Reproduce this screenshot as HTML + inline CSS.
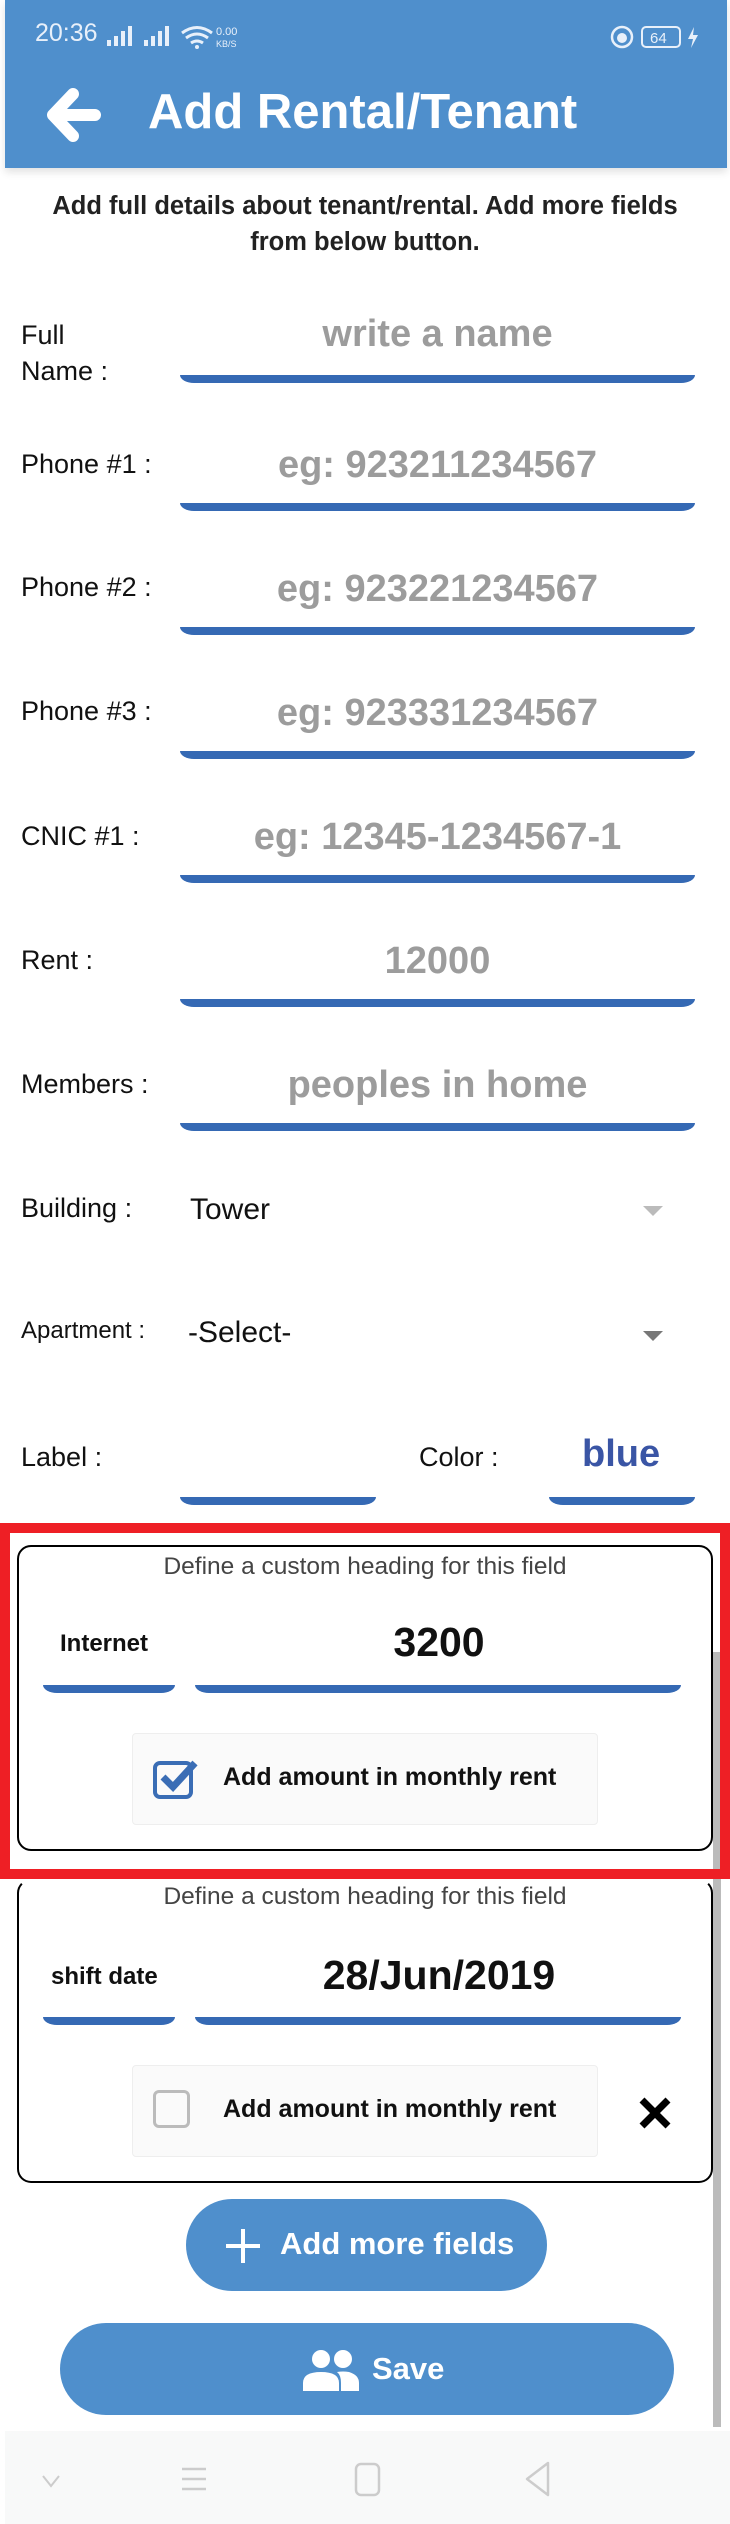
<!DOCTYPE html>
<html><head><meta charset="utf-8"><style>
*{margin:0;padding:0;box-sizing:border-box}
body{width:730px;height:2524px;position:relative;background:#fff;font-family:"Liberation Sans",sans-serif;overflow:hidden}
.a{position:absolute}
.hdr{left:5px;top:0;width:722px;height:168px;background:#4f8fcc;box-shadow:0 4px 8px rgba(0,0,0,.12)}
.lbl{position:absolute;left:21px;font-size:27px;color:#111}
.ul{position:absolute;height:8px;background:#3569b4;border-radius:0 0 14px 14px/0 0 8px 8px}
.ph{position:absolute;left:180px;width:515px;text-align:center;font-size:38px;font-weight:bold;color:#9c9c9c}
.card{position:absolute;left:17px;width:696px;border:2.5px solid #000;border-radius:14px}
.def{position:absolute;left:0;width:100%;text-align:center;font-size:24.5px;color:#444}
.chk{position:absolute;left:132px;width:466px;height:92px;background:#fafafa;border:1.5px solid #eee;border-radius:4px}
.chk span{position:absolute;left:90px;top:29px;font-size:25px;font-weight:bold;color:#111}
.btn{position:absolute;background:#4f8fcc;border-radius:46px;color:#fff;font-weight:bold;text-align:center}
</style></head><body>
<div class="a hdr"></div>
<div class="a" style="left:35px;top:19px;color:#e8f0fa;font-size:25px">20:36</div>
<svg class="a" style="left:105px;top:24px" width="140" height="26">
<g fill="#e8f0fa"><rect x="2" y="16" width="4" height="6"/><rect x="9" y="12" width="4" height="10"/><rect x="16" y="7" width="4" height="15"/><rect x="23" y="2" width="4" height="20"/>
<rect x="39" y="16" width="4" height="6"/><rect x="46" y="12" width="4" height="10"/><rect x="53" y="7" width="4" height="15"/><rect x="60" y="2" width="4" height="20"/></g>
<path d="M77 9 Q92 -2 107 9 M81 14 Q92 6 103 14 M86 19 Q92 15 98 19" stroke="#e8f0fa" stroke-width="3" fill="none"/><circle cx="92" cy="23" r="2" fill="#e8f0fa"/>
<text x="111" y="11" font-size="11" fill="#e8f0fa" font-family="Liberation Sans">0.00</text><text x="111" y="23" font-size="9" fill="#e8f0fa" font-family="Liberation Sans">KB/S</text></svg>
<svg class="a" style="left:605px;top:24px" width="100" height="30">
<circle cx="17" cy="13" r="10" stroke="#e8f0fa" stroke-width="2.5" fill="none"/><circle cx="17" cy="14" r="5" fill="#e8f0fa"/>
<rect x="37" y="3" width="38" height="20" rx="4" stroke="#e8f0fa" stroke-width="2" fill="none"/><text x="45" y="19" font-size="15" fill="#e8f0fa" font-family="Liberation Sans">64</text>
<path d="M89 3 L83 15 L88 15 L86 24 L93 11 L88 11 Z" fill="#e8f0fa"/></svg>
<svg class="a" style="left:45px;top:88px" width="56" height="56"><path d="M28 6 L8 27 L28 48 M10 27 L50 27" stroke="#fff" stroke-width="12" stroke-linecap="round" stroke-linejoin="round" fill="none"/></svg>
<div class="a" style="left:148px;top:84px;font-size:49px;font-weight:bold;color:#fff">Add Rental/Tenant</div>
<div class="a" style="left:0;top:188px;width:730px;text-align:center;font-size:25.5px;font-weight:bold;color:#222;line-height:36px">Add full details about tenant/rental. Add more fields<br>from below button.</div>

<div class="lbl" style="top:317px;line-height:36px">Full<br>Name :</div>
<div class="ph" style="top:313px">write a name</div><div class="ul" style="left:180px;top:375px;width:515px"></div>

<div class="lbl" style="top:449px">Phone #1 :</div>
<div class="ph" style="top:444px">eg: 923211234567</div><div class="ul" style="left:180px;top:503px;width:515px"></div>
<div class="lbl" style="top:572px">Phone #2 :</div>
<div class="ph" style="top:568px">eg: 923221234567</div><div class="ul" style="left:180px;top:627px;width:515px"></div>
<div class="lbl" style="top:696px">Phone #3 :</div>
<div class="ph" style="top:692px">eg: 923331234567</div><div class="ul" style="left:180px;top:751px;width:515px"></div>
<div class="lbl" style="top:821px">CNIC #1 :</div>
<div class="ph" style="top:816px">eg: 12345-1234567-1</div><div class="ul" style="left:180px;top:875px;width:515px"></div>
<div class="lbl" style="top:945px">Rent :</div>
<div class="ph" style="top:940px">12000</div><div class="ul" style="left:180px;top:999px;width:515px"></div>
<div class="lbl" style="top:1069px">Members :</div>
<div class="ph" style="top:1064px">peoples in home</div><div class="ul" style="left:180px;top:1123px;width:515px"></div>

<div class="lbl" style="top:1193px">Building :</div>
<div class="a" style="left:190px;top:1193px;font-size:30px;color:#111">Tower</div>
<div class="a" style="left:643px;top:1206px;border-left:10px solid transparent;border-right:10px solid transparent;border-top:10px solid #bbb"></div>
<div class="lbl" style="top:1317px;font-size:24px">Apartment :</div>
<div class="a" style="left:188px;top:1316px;font-size:30px;color:#111">-Select-</div>
<div class="a" style="left:643px;top:1331px;border-left:10px solid transparent;border-right:10px solid transparent;border-top:10px solid #777"></div>

<div class="lbl" style="top:1442px">Label :</div><div class="ul" style="left:180px;top:1497px;width:196px"></div>
<div class="a" style="left:419px;top:1442px;font-size:27px;color:#111">Color :</div>
<div class="a" style="left:582px;top:1433px;font-size:38px;font-weight:bold;color:#3a55a5">blue</div>
<div class="ul" style="left:549px;top:1497px;width:146px"></div>

<div class="a" style="left:713px;top:1652px;width:8px;height:775px;background:#bbb"></div>

<div class="card" style="top:1545px;height:306px">
<div class="def" style="top:6px">Define a custom heading for this field</div>
<div class="a" style="left:41px;top:83px;font-size:24px;font-weight:bold;color:#111">Internet</div>
<div class="a" style="left:178px;top:72px;width:484px;text-align:center;font-size:41px;font-weight:bold;color:#111">3200</div>
<div class="ul" style="left:24px;top:138px;width:132px"></div><div class="ul" style="left:176px;top:138px;width:486px"></div>
<div class="chk" style="left:113px;top:186px"><svg class="a" style="left:20px;top:25px" width="46" height="40"><rect x="2" y="4" width="36" height="34" rx="5" stroke="#3a6db5" stroke-width="4" fill="none"/><path d="M10 18 L20 28 L42 4" stroke="#3a6db5" stroke-width="7" fill="none"/></svg><span>Add amount in monthly rent</span></div>
</div>
<div class="a" style="left:0;top:1523px;width:730px;height:356px;border:10px solid #ee1f25"></div>

<div class="card" style="top:1879px;height:304px;border-top-color:transparent">
<div class="def" style="top:2px">Define a custom heading for this field</div>
<div class="a" style="left:32px;top:82px;font-size:24px;font-weight:bold;color:#111">shift date</div>
<div class="a" style="left:178px;top:71px;width:484px;text-align:center;font-size:41px;font-weight:bold;color:#111">28/Jun/2019</div>
<div class="ul" style="left:24px;top:136px;width:132px"></div><div class="ul" style="left:176px;top:136px;width:486px"></div>
<div class="chk" style="left:113px;top:184px"><div class="a" style="left:20px;top:24px;width:37px;height:38px;border:3px solid #bbb;border-radius:6px"></div><span>Add amount in monthly rent</span></div>
<svg class="a" style="left:618px;top:214px" width="36" height="36"><path d="M5 5 L31 31 M31 5 L5 31" stroke="#000" stroke-width="7"/></svg>
</div>

<div class="btn" style="left:186px;top:2199px;width:361px;height:92px"><svg class="a" style="left:38px;top:28px" width="38" height="38"><path d="M19 2 V36 M2 19 H36" stroke="#fff" stroke-width="4"/></svg><span class="a" style="left:94px;top:27px;font-size:31px">Add more fields</span></div>
<div class="btn" style="left:60px;top:2323px;width:614px;height:92px"><svg class="a" style="left:243px;top:22px" width="58" height="50"><circle cx="18" cy="14" r="9" fill="#fff"/><circle cx="40" cy="14" r="9" fill="#fff"/><path d="M0 46 V38 Q0 27 18 27 Q36 27 36 38 V46 Z M38 46 V38 Q38 30 34 27 Q40 26 46 27 Q56 30 56 38 V46 Z" fill="#fff"/></svg><span class="a" style="left:312px;top:28px;font-size:31px">Save</span></div>

<div class="a" style="left:5px;top:2431px;width:725px;height:93px;background:#f8f9f9"></div>
<svg class="a" style="left:0;top:2431px" width="730" height="93">
<path d="M43 45 L51 55 L59 45" stroke="#ccc" stroke-width="2" fill="none"/>
<path d="M182 38 H206 M182 48 H206 M182 58 H206" stroke="#ccc" stroke-width="2.5"/>
<rect x="356" y="33" width="23" height="31" rx="5" stroke="#ccc" stroke-width="2.5" fill="none"/>
<path d="M548 32 L527 48 L548 64 Z" stroke="#ccc" stroke-width="2.5" fill="none" stroke-linejoin="round"/>
</svg>
</body></html>
